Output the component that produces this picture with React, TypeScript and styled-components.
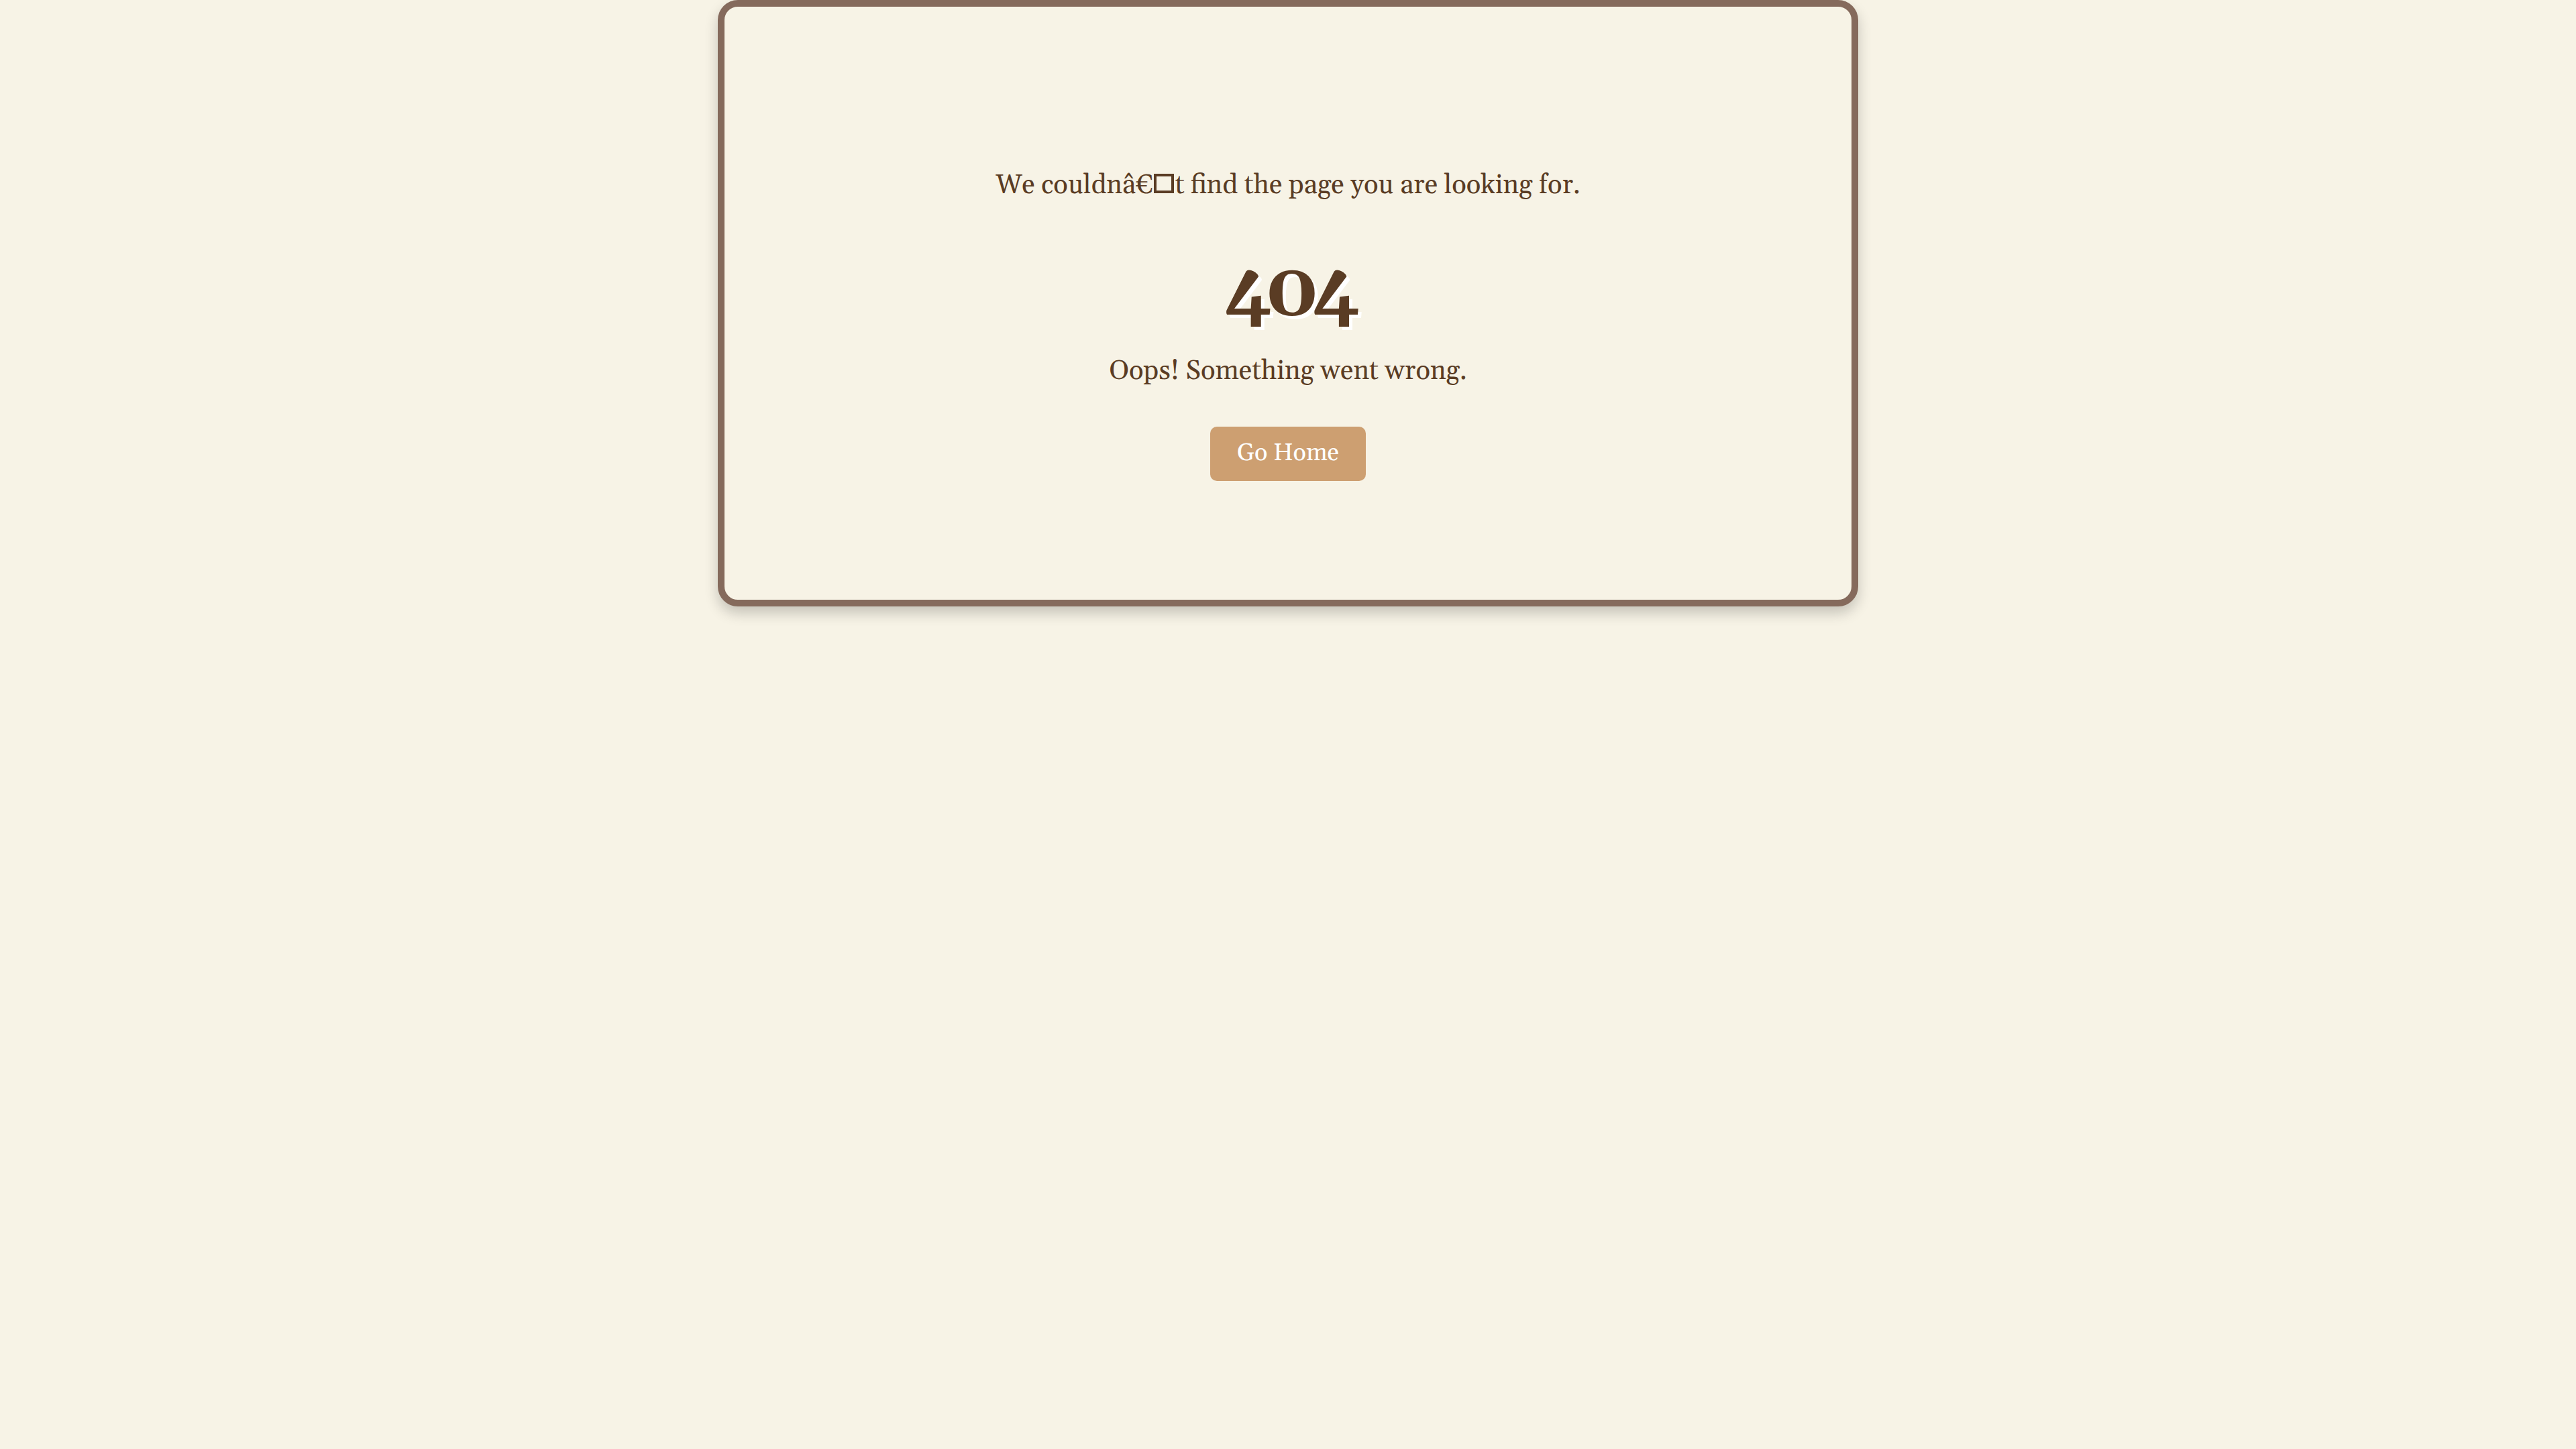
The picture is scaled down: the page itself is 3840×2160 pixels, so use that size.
import React from 'react';
import styled, { createGlobalStyle } from 'styled-components';

const GlobalStyle = createGlobalStyle`
  html,
  body {
    margin: 0;
    padding: 0;
    background-color: #f7f3e6;
  }

  body {
    font-family: Georgia, Gelasio, 'DejaVu Serif', serif;
    line-height: 1.136;
    color: #5a3c24;
  }
`;

const App = (): JSX.Element => {
  return (
    <>
      <GlobalStyle />
      <Page>
        <Card>
          <Message>
            We couldn{'\u00e2\u20ac'}
            <Tofu aria-hidden="true" />t find the page you are looking for.
          </Message>
          <Code>404</Code>
          <Subtitle>Oops! Something went wrong.</Subtitle>
          <HomeButton href="#">Go Home</HomeButton>
        </Card>
      </Page>
    </>
  );
};

export default App;

const Page = styled.main`
  display: flex;
  justify-content: center;
  min-height: 2160px;
`;

const Card = styled.section`
  box-sizing: border-box;
  width: 1700px;
  height: 904px;
  display: flex;
  flex-direction: column;
  align-items: center;
  padding: 244px 100px 0;
  background-color: #f7f3e6;
  border: 10px solid #856a5c;
  border-radius: 30px;
  box-shadow: 0 10px 20px rgba(0, 0, 0, 0.2);
`;

const Message = styled.p`
  margin: 0;
  font-size: 40px;
`;

// the broken character shows as an empty box in the original
const Tofu = styled.span`
  display: inline-block;
  box-sizing: border-box;
  width: 30px;
  height: 29px;
  margin: 0 2px 0 1px;
  border: 4px solid #5a3c24;
  vertical-align: baseline;
`;

const Code = styled.h1`
  margin: 70px 0 0;
  padding-left: 2px;
  font-size: 112px;
  font-weight: bold;
  line-height: 134px;
  letter-spacing: -10px;
  color: #5a3c24;
  text-shadow: 5px 5px 0 #ffffff;
`;

const Subtitle = styled.p`
  margin: 28px 0 0;
  font-size: 40px;
`;

const HomeButton = styled.a`
  margin-top: 59px;
  padding: 20px 40px;
  font-size: 36px;
  color: #ffffff;
  text-decoration: none;
  background-color: #cd9f71;
  border-radius: 10px;
`;
